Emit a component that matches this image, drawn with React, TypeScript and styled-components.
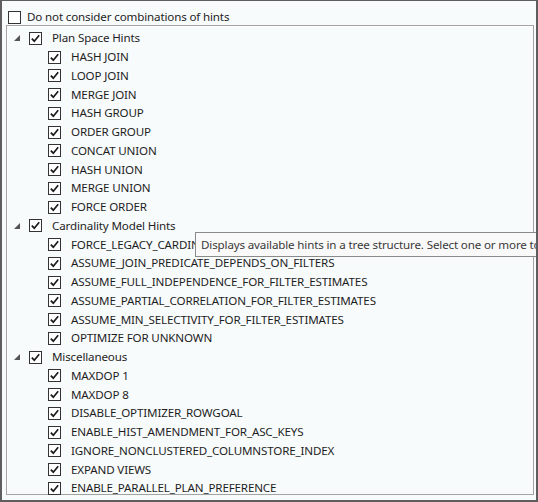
import React from "react";
import styled, { createGlobalStyle } from "styled-components";

interface HintGroup {
    title: string;
    hints: string[];
}

const groups: HintGroup[] = [
    {
        title: "Plan Space Hints",
        hints: [
            "HASH JOIN",
            "LOOP JOIN",
            "MERGE JOIN",
            "HASH GROUP",
            "ORDER GROUP",
            "CONCAT UNION",
            "HASH UNION",
            "MERGE UNION",
            "FORCE ORDER",
        ],
    },
    {
        title: "Cardinality Model Hints",
        hints: [
            "FORCE_LEGACY_CARDINALITY_ESTIMATION",
            "ASSUME_JOIN_PREDICATE_DEPENDS_ON_FILTERS",
            "ASSUME_FULL_INDEPENDENCE_FOR_FILTER_ESTIMATES",
            "ASSUME_PARTIAL_CORRELATION_FOR_FILTER_ESTIMATES",
            "ASSUME_MIN_SELECTIVITY_FOR_FILTER_ESTIMATES",
            "OPTIMIZE FOR UNKNOWN",
        ],
    },
    {
        title: "Miscellaneous",
        hints: [
            "MAXDOP 1",
            "MAXDOP 8",
            "DISABLE_OPTIMIZER_ROWGOAL",
            "ENABLE_HIST_AMENDMENT_FOR_ASC_KEYS",
            "IGNORE_NONCLUSTERED_COLUMNSTORE_INDEX",
            "EXPAND VIEWS",
            "ENABLE_PARALLEL_PLAN_PREFERENCE",
        ],
    },
];

const CheckBox = ({ checked }: { checked: boolean }) => (
    <Box>
        {checked && (
            <svg width="11" height="11" viewBox="0 0 11 11">
                <path d="M1.8 5.6 L4.3 8.2 L9.2 2.2" fill="none" stroke="#1a1a1a" strokeWidth="1.7" />
            </svg>
        )}
    </Box>
);

const App = () => {
    return (
        <>
            <GlobalStyle />
            <Frame>
                <TopOption>
                    <CheckBox checked={false} />
                    <Label>Do not consider combinations of hints</Label>
                </TopOption>
                <TreePanel>
                    {groups.map((group) => (
                        <React.Fragment key={group.title}>
                            <Row>
                                <Expander>
                                    <svg width="6" height="6" viewBox="0 0 6 6">
                                        <polygon points="6,0 6,6 0,6" fill="#555" />
                                    </svg>
                                </Expander>
                                <CheckBox checked />
                                <Label>{group.title}</Label>
                            </Row>
                            {group.hints.map((hint) => (
                                <Row key={hint} child>
                                    <CheckBox checked />
                                    <Label>{hint}</Label>
                                </Row>
                            ))}
                        </React.Fragment>
                    ))}
                </TreePanel>
                <Tooltip>Displays available hints in a tree structure. Select one or more to apply them to the query.</Tooltip>
            </Frame>
        </>
    );
};

const GlobalStyle = createGlobalStyle`
    body {
        margin: 0;
        background: #f8fbfc;
        font-family: "Segoe UI", "Noto Sans", sans-serif;
    }
`;

const Frame = styled.div`
    position: relative;
    box-sizing: border-box;
    width: 538px;
    height: 502px;
    overflow: hidden;
    background: #f8fbfc;
    border: 2px solid #5e5e5e;
    border-top-width: 1px;
    padding: 8px 3px 0 4px;
    color: #1e1e1e;
    font-size: 11.6px;
    letter-spacing: -0.15px;
`;

const TopOption = styled.div`
    display: flex;
    align-items: center;
    height: 16px;
    padding-left: 2px;
    gap: 6px;
`;

const TreePanel = styled.div`
    box-sizing: border-box;
    margin-top: 0;
    width: 528px;
    height: 470px;
    border: 1px solid #a3a3a3;
    box-shadow: inset 1px 1px 0 #ffffff;
    padding-top: 3px;
`;

const Row = styled.div<{ child?: boolean }>`
    display: flex;
    align-items: center;
    height: 18.75px;
    padding-left: ${(props) => (props.child ? "41px" : "7px")};
    gap: 10px;
    white-space: nowrap;
`;

const Expander = styled.div`
    display: flex;
    width: 6px;
    height: 6px;
    margin-right: -1px;
`;

const Box = styled.div`
    box-sizing: border-box;
    width: 13px;
    height: 13px;
    flex: none;
    border: 1px solid #333333;
    background: #ffffff;
    display: flex;
    align-items: center;
    justify-content: center;
`;

const Label = styled.span`
    line-height: 16px;
`;

const Tooltip = styled.div`
    position: absolute;
    left: 193px;
    top: 231px;
    box-sizing: border-box;
    height: 25px;
    display: flex;
    align-items: center;
    padding: 0 5px;
    white-space: nowrap;
    background: #f9f9f9;
    border: 1px solid #8a8a8a;
    color: #3a3a3a;
`;

export default App;
